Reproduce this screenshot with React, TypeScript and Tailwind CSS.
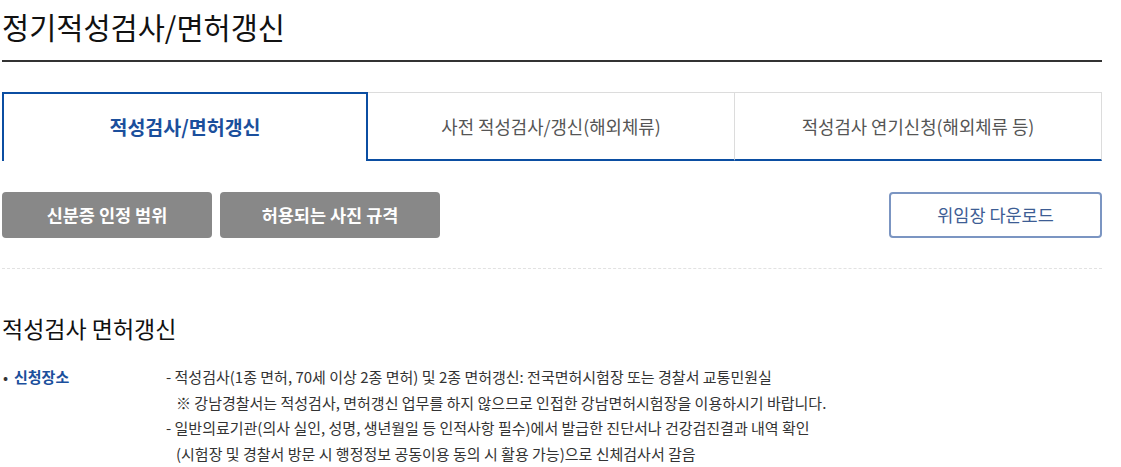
import React from 'react';

const tabs = ['적성검사/면허갱신', '사전 적성검사/갱신(해외체류)', '적성검사 연기신청(해외체류 등)'];

export default function App() {
  return (
    <div className="min-h-screen bg-white font-['Noto_Sans_CJK_KR','Noto_Sans',sans-serif] text-[#222]">
      <div className="ml-[2px] w-[1100px]">
        {/* Page title */}
        <div className="border-b-2 border-[#333] pt-[7px] pb-[14px]">
          <h1 className="text-[29.5px] leading-[39px] text-[#111]">정기적성검사/면허갱신</h1>
        </div>

        {/* Tabs */}
        <div className="mt-[30px] flex h-[69px]">
          {tabs.map((t, i) =>
            i === 0 ? (
              <div
                key={t}
                className="flex w-[366px] items-center justify-center border-x-2 border-t-2 border-[#0b4ea2] pb-[2px] text-[19.5px] font-bold text-[#1b4f9c]"
              >
                {t}
              </div>
            ) : (
              <div
                key={t}
                className="flex flex-1 items-center justify-center border-t border-r border-t-[#dcdcdc] border-r-[#dcdcdc] border-b-2 border-b-[#0b4ea2] text-[17.8px] text-[#555]"
              >
                {t}
              </div>
            )
          )}
        </div>

        {/* Buttons */}
        <div className="mt-[31px] flex items-center">
          <button className="h-[46px] w-[210px] rounded-[4px] bg-[#888888] text-[17.5px] font-bold text-white">
            신분증 인정 범위
          </button>
          <button className="ml-[8px] h-[46px] w-[220px] rounded-[4px] bg-[#888888] text-[17.5px] font-bold text-white">
            허용되는 사진 규격
          </button>
          <button className="ml-auto h-[46px] w-[213px] rounded-[4px] border-2 border-[#7b95c2] text-[17.5px] text-[#3d5d94]">
            위임장 다운로드
          </button>
        </div>

        <div className="mt-[30px] border-t border-dashed border-[#e2e2e2]" />

        {/* Section */}
        <h2 className="mt-[44px] text-[23px] leading-[30px] text-[#111]">적성검사 면허갱신</h2>

        <div className="mt-[21px] grid grid-cols-[164px_1fr] text-[15px] leading-[25.5px] text-[#333]">
          <div className="flex items-start">
            <span className="ml-[1px] w-[11px] text-[#333]">•</span>
            <span className="font-bold text-[#1b4f9c]">신청장소</span>
          </div>
          <div>
            <p>- 적성검사(1종 면허, 70세 이상 2종 면허) 및 2종 면허갱신: 전국면허시험장 또는 경찰서 교통민원실</p>
            <p className="pl-[10px]">※ 강남경찰서는 적성검사, 면허갱신 업무를 하지 않으므로 인접한 강남면허시험장을 이용하시기 바랍니다.</p>
            <p>- 일반의료기관(의사 실인, 성명, 생년월일 등 인적사항 필수)에서 발급한 진단서나 건강검진결과 내역 확인</p>
            <p className="pl-[10px]">(시험장 및 경찰서 방문 시 행정정보 공동이용 동의 시 활용 가능)으로 신체검사서 갈음</p>
          </div>
        </div>
      </div>
    </div>
  );
}
